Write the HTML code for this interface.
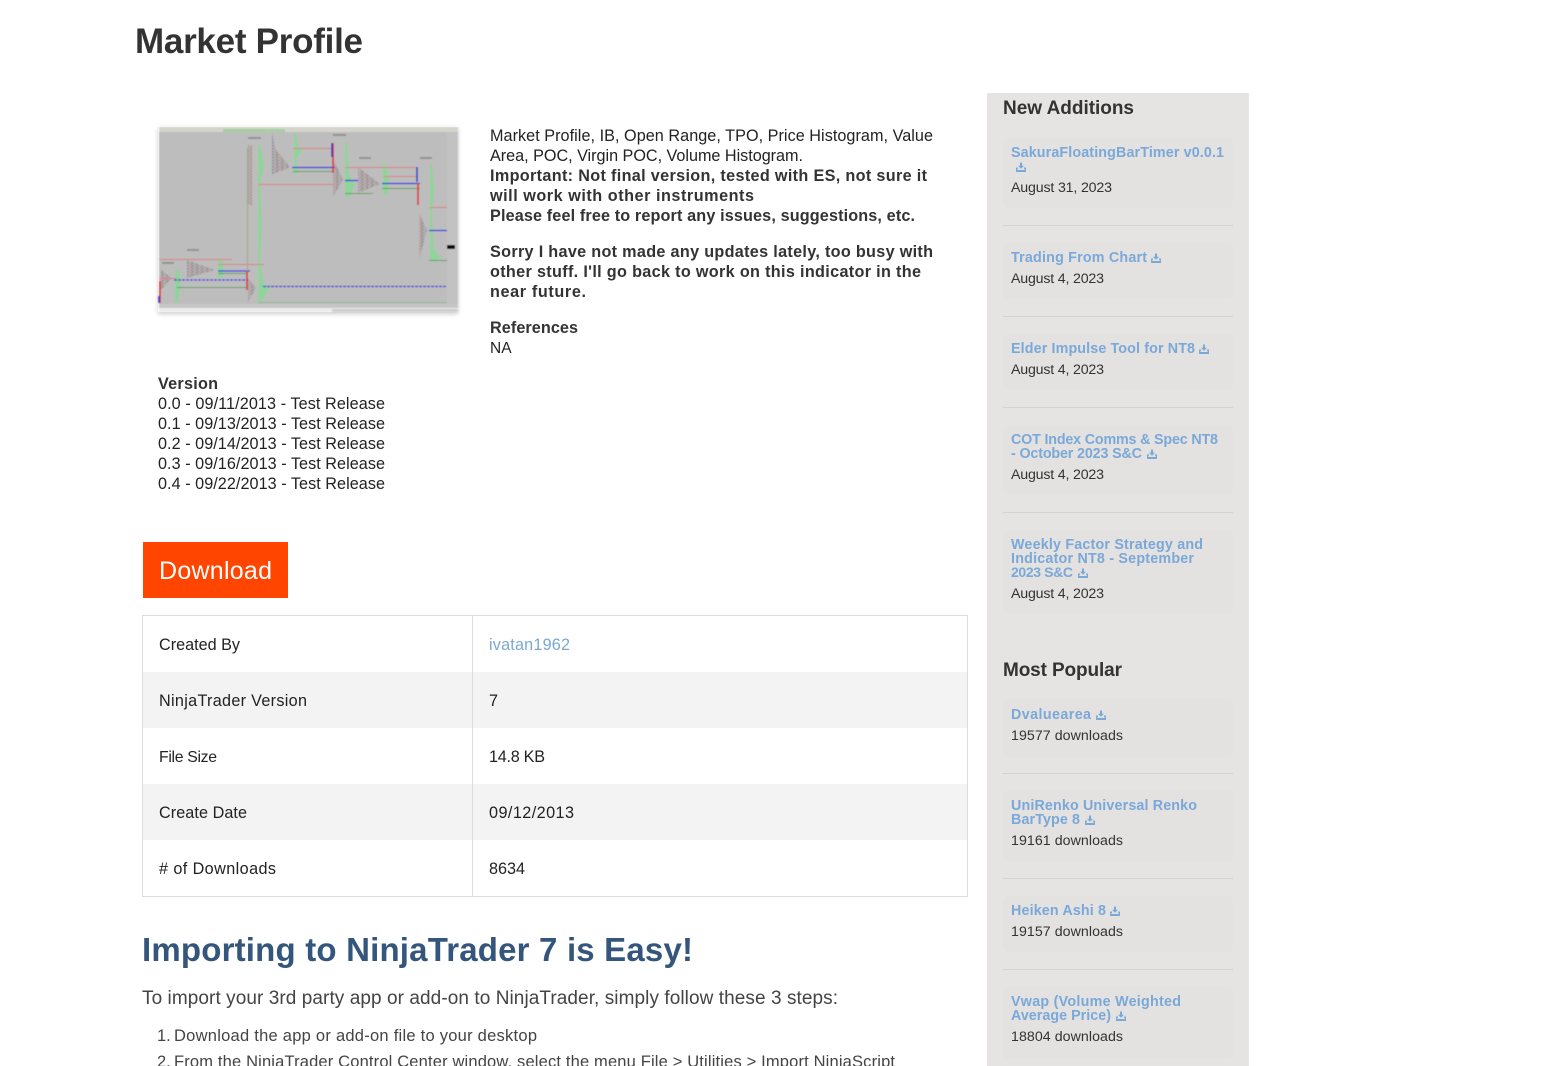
<!DOCTYPE html>
<html lang="en">
<head>
<meta charset="utf-8">
<title>Market Profile</title>
<style>
html,body{margin:0;padding:0;background:#fff;width:1544px;height:1066px;overflow:hidden}
svg{display:block;position:absolute;left:0;top:0}
text{font-family:"Liberation Sans",Arial,sans-serif;white-space:pre}
.b{font-size:16.2px;fill:#222}
.s{font-weight:700;fill:#333}
.t{font-size:16.2px;fill:#333}
.l{font-size:14.3px;font-weight:700;fill:#7aa8d8}
.d{font-size:14.2px;fill:#333}
.h{font-size:19px;font-weight:700;fill:#333}
.o{font-size:16.5px;fill:#444}
</style>
</head>
<body>
<svg width="1544" height="1066" viewBox="0 0 1544 1066" xmlns="http://www.w3.org/2000/svg">
<defs>
<filter id="sh" x="-10%" y="-10%" width="120%" height="120%"><feGaussianBlur stdDeviation="2"/></filter>
<filter id="bl" x="-5%" y="-5%" width="110%" height="110%"><feGaussianBlur stdDeviation="0.5"/></filter>
<pattern id="tpo" width="5" height="3" patternUnits="userSpaceOnUse"><rect width="5" height="3" fill="#b4b0ae"/><rect width="2" height="1" fill="#c8808c"/><rect x="2" y="1" width="2" height="1" fill="#8488c0"/><rect x="1" y="2" width="2" height="1" fill="#8ea070"/></pattern>
<symbol id="dl" viewBox="0 0 10 10"><path d="M4 0.500h2v3.200h2L5 6.800 2 3.700h2z" fill="#7aa8d8"/><path d="M2 6.200H0.700V9.500H9.300V6.200H8" fill="none" stroke="#7aa8d8" stroke-width="1.300"/><path d="M1 8h8v1.500H1z" fill="#7aa8d8"/></symbol>
</defs>

<text x="135" y="53" font-size="35" class="s" textLength="228" lengthAdjust="spacing">Market Profile</text>

<!-- screenshot thumbnail -->
<rect x="158" y="128" width="300" height="186" fill="#aaa" filter="url(#sh)" opacity=".6"/>
<rect x="158" y="126" width="300" height="186" fill="#fff"/>
<g filter="url(#bl)">
<rect x="159" y="127" width="299" height="185" fill="#bdbdbd"/>
<rect x="159" y="127" width="299" height="5" fill="#d4d4cc"/>
<rect x="223" y="129" width="62" height="3" fill="#a4d0a0"/>
<rect x="447" y="132" width="11" height="172" fill="#c2c2c2"/>
<rect x="159" y="304" width="299" height="4" fill="#c6c6c6"/>
<rect x="159" y="308" width="299" height="4" fill="#ececec"/>
<rect x="332" y="309" width="126" height="3" fill="#cccccc"/>
<rect x="447" y="245" width="8" height="4" fill="#111"/>
<g fill="url(#tpo)">
<polygon points="272,133 272,175 290,167 276,150"/>
<polygon points="187,260 187,278 215,270"/>
<polygon points="358,167 358,193 380,184"/>
<polygon points="333,158 333,197 343,180"/>
<polygon points="419,213 419,260 427,230"/>
<polygon points="161,270 161,290 172,278"/>
<polygon points="248,278 248,302 256,288"/>
<rect x="248" y="145" width="4" height="60"/>
</g>
<g fill="#8fd49a">
<polygon points="258,145 260,145 264,165 260,185 262,225 260,262 264,285 270,287 261,302 258,302"/>
<polygon points="345,142 347,142 349,175 355,185 349,197 345,197"/>
<polygon points="294,133 296,133 298,148 303,149 296,160 298,174 294,174"/>
<polygon points="383,164 385,164 389,178 387,195 383,195"/>
<polygon points="430,165 432,165 434,190 432,215 434,250 441,258 436,260 430,260"/>
<polygon points="218,257 222,262 224,270 222,278 218,278"/>
<polygon points="175,270 178,270 181,278 178,302 175,302"/>
</g>
<g stroke="#d88080" stroke-width="1" fill="none">
<path d="M159 259.500H232M218 264.500H264M258 184.500H333M293 148.500H332M345 167.500H418M383 176.500H418M429 207.500H447M159 278.500H177"/>
</g>
<g stroke="#58a058" stroke-width="1" fill="none">
<path d="M293 171.500H333M345 193.500H373M382 188.500H420M429 260.500H447M177 287.500H247M218 273.500H247"/>
<path d="M258 302.500H447" stroke="#90b890"/>
</g>
<g stroke="#2030e0" fill="none" stroke-width="1.200">
<path d="M292 167.500H335M345 180.500H358M382 183.500H420M429 230.500H447M218 271H250"/>
<path d="M174 280H248M263 286.500H447" stroke-dasharray="3 1"/>
</g>
<path d="M247.500 148V271" stroke="#a0a070" stroke-width=".8"/>
<g stroke="#e02020" stroke-width="1.500" fill="none"><path d="M160 281V303M247 271V290M333 143V173M418 183V205"/></g>
<g stroke="#2030d0" stroke-width="1.500" fill="none"><path d="M332 143V157M417 167V182M159 296V303"/></g>
<g fill="#777" opacity=".6"><rect x="248" y="137" width="13" height="2"/><rect x="333" y="134" width="13" height="2"/><rect x="359" y="157" width="12" height="2"/><rect x="420" y="157" width="12" height="2"/><rect x="187" y="249" width="12" height="2"/><rect x="162" y="262" width="12" height="2"/></g>
</g>

<!-- description -->
<text class="b" x="490" y="141" textLength="443">Market Profile, IB, Open Range, TPO, Price Histogram, Value</text>
<text class="b" x="490" y="161" textLength="313">Area, POC, Virgin POC, Volume Histogram.</text>
<text class="t s" x="490" y="181" textLength="437">Important: Not final version, tested with ES, not sure it</text>
<text class="t s" x="490" y="201" textLength="264">will work with other instruments</text>
<text class="t s" x="490" y="221" textLength="425">Please feel free to report any issues, suggestions, etc.</text>
<text class="t s" x="490" y="257" textLength="443">Sorry I have not made any updates lately, too busy with</text>
<text class="t s" x="490" y="277" textLength="431">other stuff. I'll go back to work on this indicator in the</text>
<text class="t s" x="490" y="297" textLength="96">near future.</text>
<text class="t s" x="490" y="333" textLength="88">References</text>
<text x="490" y="353" font-size="15.500" fill="#222">NA</text>

<text class="t s" x="158" y="389" textLength="60">Version</text>
<text class="b" x="158" y="409" textLength="227">0.0 - 09/11/2013 - Test Release</text>
<text class="b" x="158" y="429" textLength="227">0.1 - 09/13/2013 - Test Release</text>
<text class="b" x="158" y="449" textLength="227">0.2 - 09/14/2013 - Test Release</text>
<text class="b" x="158" y="469" textLength="227">0.3 - 09/16/2013 - Test Release</text>
<text class="b" x="158" y="489" textLength="227">0.4 - 09/22/2013 - Test Release</text>

<!-- download -->
<rect x="143" y="542" width="145" height="56" fill="#ff4500"/>
<text x="159" y="579" font-size="25" fill="#fff" textLength="113">Download</text>

<!-- table -->
<rect x="143" y="672" width="824" height="56" fill="#f3f3f3"/>
<rect x="143" y="784" width="824" height="56" fill="#f3f3f3"/>
<rect x="142.500" y="615.500" width="825" height="281" fill="none" stroke="#ddd"/>
<path d="M472.500 616V896" stroke="#ddd"/>
<text class="b" x="159" y="650" textLength="81">Created By</text>
<text class="b" x="489" y="650" textLength="81" style="fill:#7aa8d0">ivatan1962</text>
<text class="b" x="159" y="706" textLength="148">NinjaTrader Version</text>
<text class="b" x="489" y="706">7</text>
<text x="159" y="762" font-size="15.800" fill="#222" textLength="58">File Size</text>
<text class="b" x="489" y="762" textLength="56">14.8 KB</text>
<text class="b" x="159" y="818" textLength="88">Create Date</text>
<text class="b" x="489" y="818" textLength="85">09/12/2013</text>
<text class="b" x="159" y="874" textLength="117"># of Downloads</text>
<text class="b" x="489" y="874" textLength="36">8634</text>

<!-- import -->
<text x="142" y="961" font-size="33" font-weight="700" fill="#34567c" textLength="551">Importing to NinjaTrader 7 is Easy!</text>
<text x="142" y="1004" font-size="19" fill="#444" textLength="696">To import your 3rd party app or add-on to NinjaTrader, simply follow these 3 steps:</text>
<text class="o" x="157" y="1041">1.</text>
<text class="o" x="174" y="1041" textLength="363">Download the app or add-on file to your desktop</text>
<text class="o" x="157" y="1067">2.</text>
<text class="o" x="174" y="1067" textLength="721">From the NinjaTrader Control Center window, select the menu File &gt; Utilities &gt; Import NinjaScript</text>

<!-- sidebar -->
<rect x="987" y="93" width="262" height="973" fill="#e5e4e3"/>
<g fill="#e3e2e1">
<rect x="1003" y="137" width="230" height="71" rx="6"/>
<rect x="1003" y="243" width="230" height="56" rx="6"/>
<rect x="1003" y="334" width="230" height="56" rx="6"/>
<rect x="1003" y="425" width="230" height="70" rx="6"/>
<rect x="1003" y="530" width="230" height="84" rx="6"/>
<rect x="1003" y="699" width="230" height="58" rx="6"/>
<rect x="1003" y="790" width="230" height="72" rx="6"/>
<rect x="1003" y="896" width="230" height="56" rx="6"/>
<rect x="1003" y="987" width="230" height="72" rx="6"/>
</g>
<path d="M1003 225.500H1233M1003 316.500H1233M1003 407.500H1233M1003 512.500H1233M1003 773.500H1233M1003 878.500H1233M1003 969.500H1233" stroke="#d3d3d3"/>

<text class="h" x="1003" y="114" textLength="131">New Additions</text>
<text class="l" x="1011" y="157" textLength="213">SakuraFloatingBarTimer v0.0.1</text>
<use href="#dl" x="1016" y="162" width="10" height="10"/>
<text class="d" x="1011" y="192" textLength="101">August 31, 2023</text>

<text class="l" x="1011" y="262" textLength="136">Trading From Chart</text>
<use href="#dl" x="1151" y="253" width="10" height="10"/>
<text class="d" x="1011" y="283" textLength="93">August 4, 2023</text>

<text class="l" x="1011" y="353" textLength="184">Elder Impulse Tool for NT8</text>
<use href="#dl" x="1199" y="344" width="10" height="10"/>
<text class="d" x="1011" y="374" textLength="93">August 4, 2023</text>

<text class="l" x="1011" y="444" textLength="207">COT Index Comms &amp; Spec NT8</text>
<text class="l" x="1011" y="458" textLength="131">- October 2023 S&amp;C</text>
<use href="#dl" x="1147" y="449" width="10" height="10"/>
<text class="d" x="1011" y="479" textLength="93">August 4, 2023</text>

<text class="l" x="1011" y="549" textLength="192">Weekly Factor Strategy and</text>
<text class="l" x="1011" y="563" textLength="183">Indicator NT8 - September</text>
<text class="l" x="1011" y="577" font-size="14" style="font-size:14px" textLength="62">2023 S&amp;C</text>
<use href="#dl" x="1078" y="568" width="10" height="10"/>
<text class="d" x="1011" y="598" textLength="93">August 4, 2023</text>

<text class="h" x="1003" y="676" textLength="119">Most Popular</text>
<text class="l" x="1011" y="719" textLength="80">Dvaluearea</text>
<use href="#dl" x="1096" y="710" width="10" height="10"/>
<text class="d" x="1011" y="740" textLength="112">19577 downloads</text>

<text class="l" x="1011" y="810" textLength="186">UniRenko Universal Renko</text>
<text class="l" x="1011" y="824" textLength="69">BarType 8</text>
<use href="#dl" x="1085" y="815" width="10" height="10"/>
<text class="d" x="1011" y="845" textLength="112">19161 downloads</text>

<text class="l" x="1011" y="915" textLength="95">Heiken Ashi 8</text>
<use href="#dl" x="1110" y="906" width="10" height="10"/>
<text class="d" x="1011" y="936" textLength="112">19157 downloads</text>

<text class="l" x="1011" y="1006" textLength="170">Vwap (Volume Weighted</text>
<text class="l" x="1011" y="1020" textLength="100">Average Price)</text>
<use href="#dl" x="1116" y="1011" width="10" height="10"/>
<text class="d" x="1011" y="1041" textLength="112">18804 downloads</text>
</svg>
</body>
</html>
